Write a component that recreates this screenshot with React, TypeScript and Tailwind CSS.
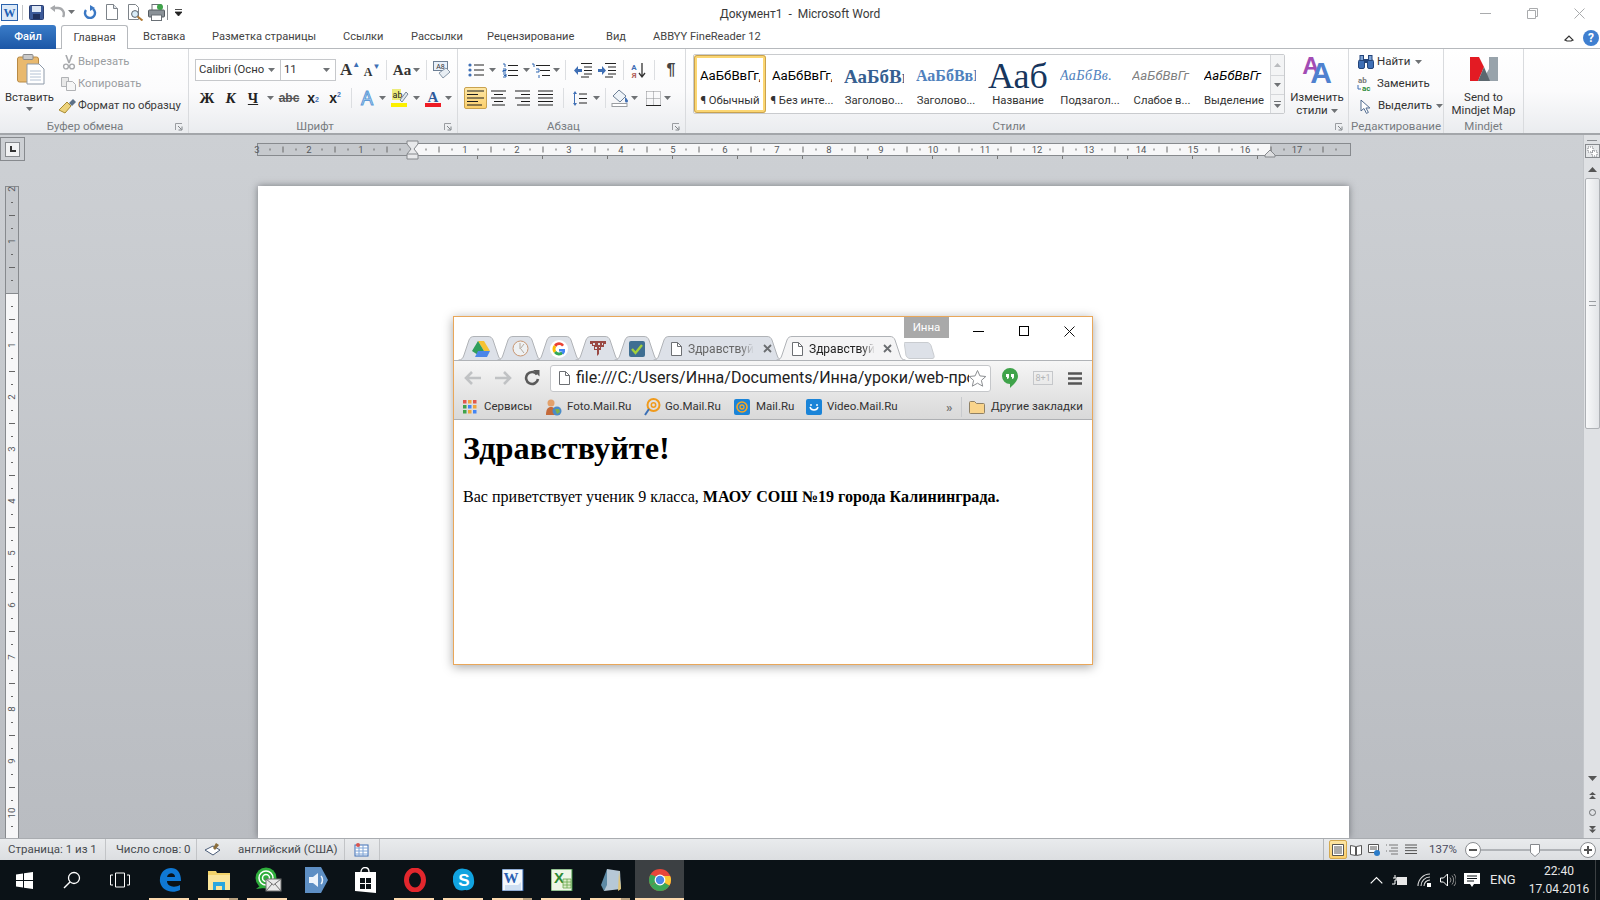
import type { ReactNode } from "react";

const uiFont = "font-['Roboto',sans-serif]";

const Caret = ({ className = "" }: { className?: string }) => (
  <svg width="7" height="4" viewBox="0 0 7 4" className={className}>
    <path d="M0 0h7L3.5 4z" fill="#6f7275" />
  </svg>
);

const Sep = ({ className = "" }: { className?: string }) => (
  <div className={`w-px h-[20px] bg-[#dcdee1] ${className}`} />
);

// cell of a fixed width with its content centered
const Cell = ({ className = "", children }: { className?: string; children?: ReactNode }) => (
  <div className={`flex items-center justify-center h-full shrink-0 ${className}`}>{children}</div>
);

const Launcher = () => (
  <svg width="8" height="8" viewBox="0 0 8 8" className="absolute right-[5px] top-[4px]">
    <path d="M0.5 7V0.5H7" fill="none" stroke="#9a9da1" />
    <path d="M3 3l3.5 3.5M7 3.5V7H3.5" fill="none" stroke="#7f8387" />
  </svg>
);

const Group = ({ label, className, labelClass = "", launcher, children }: { label: string; className: string; labelClass?: string; launcher?: boolean; children: ReactNode }) => (
  <div className={`relative flex flex-col shrink-0 border-r border-[#d9dbde] ${className}`}>
    <div className="h-[70px]">{children}</div>
    <div className={`relative h-[14px] text-center text-[11.5px] leading-[14px] text-[#777b80] ${labelClass}`}>
      {label}
      {launcher && <Launcher />}
    </div>
  </div>
);

const Lines = ({ kind }: { kind: "left" | "center" | "right" | "just" }) => {
  const rows = {
    left: ["M0 1h17", "M0 4.5h11", "M0 8h17", "M0 11.5h11", "M0 15h15"],
    center: ["M0 1h15", "M3 4.5h9", "M0 8h15", "M3 11.5h9", "M1 15h13"],
    right: ["M0 1h15", "M6 4.5h9", "M0 8h15", "M6 11.5h9", "M2 15h13"],
    just: ["M0 1h15", "M0 4.5h15", "M0 8h15", "M0 11.5h15", "M0 15h15"],
  }[kind];
  return (
    <svg width="17" height="16" viewBox="0 0 17 16">
      <path d={rows.join("")} stroke="#1c1c1c" strokeWidth="1.2" />
    </svg>
  );
};

const Bullets = () => (
  <svg width="16" height="14" viewBox="0 0 16 14">
    <path d="M6 2h10M6 7h10M6 12h10" stroke="#222" strokeWidth="1.2" />
    <circle cx="2" cy="2" r="1.6" fill="#3f6fb5" />
    <circle cx="2" cy="7" r="1.6" fill="#3f6fb5" />
    <circle cx="2" cy="12" r="1.6" fill="#3f6fb5" />
  </svg>
);

const Numbers = () => (
  <svg width="16" height="15" viewBox="0 0 16 15">
    <path d="M6 2.5h10M6 7.5h10M6 12.5h10" stroke="#222" strokeWidth="1.2" />
    <path d="M1 1h2v3M1 6h3v1.5H1V9h3M1 11h3v3H1M2 12.5h2" stroke="#2c64b0" strokeWidth="1" fill="none" />
  </svg>
);

const Multi = () => (
  <svg width="20" height="15" viewBox="0 0 20 15">
    <path d="M5 2.5h14M9 7.5h10M11 12.5h8" stroke="#222" strokeWidth="1.1" />
    <path d="M1 1h2v3M5 6h3v3H5M8 12v3" stroke="#2c64b0" strokeWidth="1" fill="none" />
  </svg>
);

const Indent = ({ flip }: { flip?: boolean }) => (
  <svg width="18" height="16" viewBox="0 0 18 16">
    <path d="M7 1.5h11M10 5h8M10 8.5h8M10 12h8M7 15h8" stroke="#222" strokeWidth="1.2" />
    {flip ? <path d="M0 7h4V4l4 4.5L4 13v-3H0z" fill="#3f6fb5" /> : <path d="M8 7H4V4L0 8.5 4 13v-3h4z" fill="#3f6fb5" />}
  </svg>
);

const RedoA = ({ stroke }: { stroke: string }) => (
  <svg width="14" height="14" viewBox="0 0 14 14">
    <path d="M3 5a5 5 0 1 0 7-1" fill="none" stroke={stroke} strokeWidth="2.4" />
    <path d="M7 0v6l5-3z" fill={stroke} />
  </svg>
);

const QuickAccess = () => (
  <div className="flex items-center h-full pl-[1px]">
    <svg width="17" height="17" viewBox="0 0 17 17">
      <rect x="0.5" y="0.5" width="16" height="16" fill="#dce9f7" stroke="#2a62ad" />
      <text x="8.5" y="13" textAnchor="middle" fontSize="12" fontWeight="700" fill="#1f5fb3" fontFamily="Liberation Serif">W</text>
    </svg>
    <div className="w-px h-[15px] bg-[#c4c6c9] ml-[4px] mr-[6px]" />
    <svg width="15" height="15" viewBox="0 0 15 15" className="mr-[6px]">
      <rect x="0.5" y="0.5" width="14" height="14" rx="1" fill="#3c5a99" stroke="#2a3f73" />
      <rect x="3" y="1" width="9" height="6" fill="#dfe8f5" />
      <rect x="4" y="9" width="7" height="5" fill="#20305c" />
    </svg>
    <svg width="15" height="14" viewBox="0 0 15 14">
      <path d="M13 12a6 6 0 0 0-6-9H4" fill="none" stroke="#a7a9ac" strokeWidth="2.4" />
      <path d="M5 0v7L0 3z" fill="#a7a9ac" />
    </svg>
    <Caret className="ml-[3px] mr-[8px]" />
    <RedoA stroke="#3b78c4" />
    <svg width="14" height="16" viewBox="0 0 14 16" className="ml-[8px]">
      <path d="M1.5.5h7l4 4v11h-11z" fill="#fff" stroke="#7d8389" />
      <path d="M8.5.5v4h4" fill="#dfe4ea" stroke="#7d8389" />
    </svg>
    <svg width="17" height="17" viewBox="0 0 17 17" className="ml-[8px]">
      <path d="M1.5.5h7l3 3v12h-10z" fill="#fff" stroke="#7d8389" />
      <circle cx="8" cy="10" r="3.4" fill="#d9ecf7" stroke="#59616a" />
      <path d="M10.5 12.5l5 4" stroke="#b07a35" strokeWidth="2" />
    </svg>
    <svg width="17" height="17" viewBox="0 0 17 17" className="ml-[4px]">
      <rect x="4" y="0.5" width="9" height="6" fill="#fff" stroke="#6a7076" />
      <rect x="0.5" y="6" width="16" height="7" rx="1" fill="#8b9298" stroke="#555b61" />
      <rect x="3.5" y="11" width="10" height="5.5" fill="#fff" stroke="#6a7076" />
      <circle cx="12" cy="3" r="3" fill="#3fa34a" />
    </svg>
    <div className="w-px h-[15px] bg-[#8d9094] ml-[2px] mr-[7px]" />
    <svg width="7" height="7" viewBox="0 0 7 7">
      <path d="M0 .5h7M0 3h7L3.5 7z" stroke="#222" fill="#222" strokeWidth="0.8" />
    </svg>
  </div>
);

const TitleBar = () => (
  <div className="grid grid-cols-[1fr_auto_1fr] h-[24px] items-center shrink-0 bg-white">
    <QuickAccess />
    <div className="pt-[3px] text-[12px] text-[#3a3a3a] whitespace-pre">Документ1  -  Microsoft Word</div>
    <div className="flex items-center justify-end h-full pr-[15px] gap-[36px] pt-[3px]">
      <div className="w-[11px] h-px bg-[#a9abad]" />
      <svg width="11" height="11" viewBox="0 0 11 11">
        <path d="M.5 2.5h8v8h-8zM2.5 2.5v-2h8v8h-2" fill="none" stroke="#a9abad" />
      </svg>
      <svg width="11" height="11" viewBox="0 0 11 11">
        <path d="M.5.5l10 10M10.5.5l-10 10" stroke="#a9abad" />
      </svg>
    </div>
  </div>
);

const MenuTabs = () => (
  <div className="relative flex items-end h-[25px] shrink-0 bg-white border-b border-[#b6b9bd] text-[11.1px] text-[#444]">
    <div className="w-[56px] h-[24px] -mb-px rounded-t-[3px] bg-gradient-to-b from-[#3a7cc8] to-[#1c57a6] text-white text-center leading-[24px] font-medium">Файл</div>
    <div className="ml-[5px] w-[67px] h-[24px] -mb-px rounded-t-[3px] border border-b-0 border-[#b6b9bd] bg-white text-center leading-[23px]">Главная</div>
    <span className="absolute left-[143px] top-[5px]">Вставка</span>
    <span className="absolute left-[212px] top-[5px]">Разметка страницы</span>
    <span className="absolute left-[343px] top-[5px]">Ссылки</span>
    <span className="absolute left-[411px] top-[5px]">Рассылки</span>
    <span className="absolute left-[487px] top-[5px]">Рецензирование</span>
    <span className="absolute left-[606px] top-[5px]">Вид</span>
    <span className="absolute left-[653px] top-[5px]">ABBYY FineReader 12</span>
    <div className="ml-auto flex items-center gap-[9px] pr-[1px] pb-[2px]">
      <svg width="10" height="7" viewBox="0 0 10 7">
        <path d="M1 5l4-4 4 4-2 1H3z" fill="none" stroke="#333" strokeWidth="1.2" />
      </svg>
      <div className="w-[16px] h-[16px] rounded-full bg-[#3f7fd0] text-white text-[12px] font-bold leading-[16px] text-center">?</div>
    </div>
  </div>
);

const Clipboard = () => (
  <Group label="Буфер обмена" className="w-[189px]" labelClass="pr-[18px]" launcher>
    <div className="flex h-full">
      <div className="w-[59px] flex flex-col items-center pt-[5px] text-[11.3px] text-[#333]">
        <svg width="28" height="31" viewBox="0 0 28 31" className="ml-[3px]">
          <rect x="0.5" y="3" width="21" height="25" rx="2" fill="#e9b96e" stroke="#b88a45" />
          <rect x="6" y="0.5" width="10" height="5" rx="1" fill="#c9c9c9" stroke="#8a8a8a" />
          <path d="M10 10h12l5 5v15H10z" fill="#fff" stroke="#8d99a8" />
          <path d="M13 17h11M13 20h11M13 23h11M13 26h11" stroke="#b4c2d4" />
        </svg>
        <div className="mt-[5px] leading-[15px]">Вставить</div>
        <Caret className="mt-[2px]" />
      </div>
      <div className="flex flex-col pt-[2px] text-[11.3px] whitespace-nowrap">
        <div className="flex items-center h-[22px] text-[#9a9da1]">
          <svg width="14" height="15" viewBox="0 0 14 15" className="ml-[3px] mr-[2px]">
            <path d="M4 0l3 8M10 0L7 8" stroke="#a7a9ac" strokeWidth="1.6" />
            <circle cx="4" cy="11.5" r="2.4" fill="none" stroke="#a7a9ac" strokeWidth="1.4" />
            <circle cx="10" cy="11.5" r="2.4" fill="none" stroke="#a7a9ac" strokeWidth="1.4" />
          </svg>
          Вырезать
        </div>
        <div className="flex items-center h-[22px] text-[#9a9da1]">
          <svg width="15" height="14" viewBox="0 0 15 14" className="ml-[2px] mr-[2px]">
            <path d="M.5.5h7v9h-7z" fill="#e8e8e8" stroke="#b0b2b5" />
            <path d="M5.5 4.5h6l3 3v6h-9z" fill="#f6f6f6" stroke="#b0b2b5" />
          </svg>
          Копировать
        </div>
        <div className="flex items-center h-[22px] text-[#3a3a3a]">
          <svg width="17" height="15" viewBox="0 0 17 15" className="mr-[2px]">
            <path d="M8 3l4 4-6 7-6-3z" fill="#ecd27b" stroke="#a88a32" />
            <path d="M10 4l4-4 3 3-4 4z" fill="#5b7088" />
          </svg>
          Формат по образцу
        </div>
      </div>
    </div>
  </Group>
);

const FontGroup = () => (
  <Group label="Шрифт" className="w-[269px]" labelClass="pr-[16px]" launcher>
    <div className="flex h-[22px] mt-[10px] ml-[6px] items-center text-[#333]">
      <div className="flex items-center justify-between w-[86px] h-full border border-[#c6c8cb] bg-white pl-[3px] pr-[5px] text-[11.3px] overflow-hidden">
        <span className="whitespace-nowrap w-[68px] overflow-hidden">Calibri (Осно</span>
        <Caret />
      </div>
      <div className="flex items-center justify-between w-[55px] h-full border border-l-0 border-[#c6c8cb] bg-white pl-[3px] pr-[5px] text-[11.3px]">
        11
        <Caret />
      </div>
      <Cell className="w-[22px] ml-[3px] text-[17px] font-bold font-['Liberation_Serif',serif]">A<span className="text-[8px] text-[#3f6fb5] -mt-[10px]">▲</span></Cell>
      <Cell className="w-[22px] text-[12px] font-bold font-['Liberation_Serif',serif] pt-[3px]">A<span className="text-[8px] text-[#3f6fb5] -mt-[10px]">▼</span></Cell>
      <Sep className="mx-[3px]" />
      <Cell className="w-[24px] text-[15px] font-bold font-['Liberation_Serif',serif]">Aa</Cell>
      <Caret className="-ml-[1px]" />
      <Sep className="ml-[6px] mr-[6px]" />
      <svg width="18" height="18" viewBox="0 0 18 18">
        <rect x="0.5" y="0.5" width="14" height="9" fill="#e8f0fa" stroke="#6d7f95" />
        <text x="7.5" y="8" textAnchor="middle" fontSize="7" fill="#333">A8</text>
        <path d="M6 12l7-5 4 4-7 6z" fill="#e8eef4" stroke="#8797a8" />
      </svg>
    </div>
    <div className="flex h-[22px] mt-[6px] ml-[6px] items-center text-[#222]">
      <Cell className="w-[24px] font-bold font-['Liberation_Serif',serif] text-[15px]">Ж</Cell>
      <Cell className="w-[23px] font-bold italic font-['Liberation_Serif',serif] text-[15px]">К</Cell>
      <Cell className="w-[22px] font-bold font-['Liberation_Serif',serif] text-[14px] underline">Ч</Cell>
      <Cell className="w-[12px]"><Caret /></Cell>
      <Cell className="w-[26px] font-bold font-['Liberation_Sans',sans-serif] text-[12px] text-[#555] line-through">abc</Cell>
      <Cell className="w-[22px] font-bold font-['Liberation_Sans',sans-serif] text-[14px]">x<sub className="text-[7px] text-[#3f6fb5]">2</sub></Cell>
      <Cell className="w-[22px] font-bold font-['Liberation_Sans',sans-serif] text-[14px]">x<sup className="text-[7px] text-[#3f6fb5]">2</sup></Cell>
      <Cell className="w-[10px]"><Sep /></Cell>
      <Cell className="w-[22px] text-[19px] font-['Noto_Sans',sans-serif] text-[#cfe4f7] [-webkit-text-stroke:1px_#5d9bd8]">A</Cell>
      <Cell className="w-[8px]"><Caret /></Cell>
      <div className="w-[2px]" />
      <Cell className="w-[24px]">
        <svg width="18" height="18" viewBox="0 0 18 18">
          <rect x="1" y="0" width="9" height="11" fill="#ecec7a" />
          <text x="1.5" y="9" fontSize="9" fill="#222">ab</text>
          <path d="M9 11l6-8 2 2-6 8z" fill="#dfe6ee" stroke="#7a8a9b" />
          <rect x="0" y="14" width="16" height="4" fill="#fcf000" />
        </svg>
      </Cell>
      <Cell className="w-[8px]"><Caret /></Cell>
      <div className="w-[2px]" />
      <Cell className="w-[22px] relative">
        <svg width="16" height="18" viewBox="0 0 16 18">
          <text x="8" y="13" textAnchor="middle" fontSize="15" fontWeight="700" fill="#2e5a9c" fontFamily="Liberation Serif">A</text>
          <rect x="0" y="14" width="16" height="4" fill="#ee1c25" />
        </svg>
      </Cell>
      <Cell className="w-[8px]"><Caret /></Cell>
    </div>
  </Group>
);

const ParagraphGroup = () => (
  <Group label="Абзац" className="w-[228px]" labelClass="pr-[16px]" launcher>
    <div className="flex h-[22px] mt-[10px] ml-[8px] items-center">
      <Cell className="w-[20px]"><Bullets /></Cell>
      <Cell className="w-[12px]"><Caret /></Cell>
      <Cell className="w-[24px]"><Numbers /></Cell>
      <Cell className="w-[8px]"><Caret /></Cell>
      <Cell className="w-[22px]"><Multi /></Cell>
      <Cell className="w-[8px]"><Caret /></Cell>
      <Cell className="w-[11px]"><Sep /></Cell>
      <Cell className="w-[24px]"><Indent /></Cell>
      <Cell className="w-[24px]"><Indent flip /></Cell>
      <Cell className="w-[8px]"><Sep /></Cell>
      <Cell className="w-[22px] relative">
        <svg width="18" height="17" viewBox="0 0 18 17">
          <text x="5" y="8" textAnchor="middle" fontSize="8" fontWeight="700" fill="#3f6fb5">А</text>
          <text x="5" y="16" textAnchor="middle" fontSize="8" fontWeight="700" fill="#b0605a">Я</text>
          <path d="M13 1v13M10 11l3 4 3-4" fill="none" stroke="#333" strokeWidth="1.3" />
        </svg>
      </Cell>
      <Cell className="w-[10px]"><Sep /></Cell>
      <Cell className="w-[24px] font-['Liberation_Sans',sans-serif] font-bold text-[16px] text-[#444]">¶</Cell>
    </div>
    <div className="flex h-[22px] mt-[6px] ml-[6px] items-center">
      <Cell className="w-[23px] rounded-[2px] border border-[#c9a24f] bg-gradient-to-b from-[#fde6a4] to-[#fbcf6b]"><Lines kind="left" /></Cell>
      <Cell className="w-[24px]"><Lines kind="center" /></Cell>
      <Cell className="w-[24px]"><Lines kind="right" /></Cell>
      <Cell className="w-[23px]"><Lines kind="just" /></Cell>
      <Cell className="w-[10px]"><Sep /></Cell>
      <Cell className="w-[24px]">
        <svg width="14" height="17" viewBox="0 0 14 17">
          <path d="M2 1l-2 3h4zM2 16l-2-3h4z" fill="#3f6fb5" />
          <path d="M1.5 3v11" stroke="#3f6fb5" />
          <path d="M6 4h8M6 8.5h8M6 13h8" stroke="#222" strokeWidth="1.2" />
        </svg>
      </Cell>
      <Cell className="w-[8px]"><Caret /></Cell>
      <Cell className="w-[10px]"><Sep /></Cell>
      <Cell className="w-[20px]">
        <svg width="18" height="18" viewBox="0 0 18 18">
          <path d="M8 1l7 6-6 6-7-6z" fill="#eef3f8" stroke="#6d7f95" />
          <path d="M14 8c2 2 3 3 3 4a1.5 1.5 0 0 1-3 0z" fill="#3f6fb5" />
          <rect x="1" y="14.5" width="15" height="3" fill="#fff" stroke="#9a9da1" />
        </svg>
      </Cell>
      <Cell className="w-[8px]"><Caret /></Cell>
      <div className="w-[5px]" />
      <Cell className="w-[20px]">
        <svg width="15" height="15" viewBox="0 0 15 15">
          <path d="M.5.5h14M.5 7.5h14M7.5.5v14M.5.5v14M14.5.5v14" stroke="#8a8d91" strokeDasharray="1 1" fill="none" />
          <path d="M0 14.500h15" stroke="#222" />
        </svg>
      </Cell>
      <Cell className="w-[8px]"><Caret /></Cell>
    </div>
  </Group>
);

const styleItems = [
  { sample: "АаБбВвГг,", label: "¶ Обычный", cls: "text-[13.2px] text-black font-['Roboto',sans-serif]" },
  { sample: "АаБбВвГг,", label: "¶ Без инте...", cls: "text-[13.2px] text-black font-['Roboto',sans-serif]" },
  { sample: "АаБбВвГ", label: "Заголово...", cls: "text-[19px] font-bold text-[#365f91] font-['Liberation_Serif',serif]" },
  { sample: "АаБбВвГ", label: "Заголово...", cls: "text-[16px] font-bold text-[#4f81bd] font-['Liberation_Serif',serif]" },
  { sample: "Ааб", label: "Название", cls: "text-[36px] text-[#17365d] font-['Liberation_Serif',serif]" },
  { sample: "АаБбВв.", label: "Подзагол...", cls: "text-[14px] italic text-[#4f81bd] font-['Liberation_Serif',serif] tracking-[0.5px]" },
  { sample: "АаБбВвГг", label: "Слабое в...", cls: "text-[13.2px] italic text-[#808080] font-['Roboto',sans-serif]" },
  { sample: "АаБбВвГг", label: "Выделение", cls: "text-[13.2px] italic text-black font-['Roboto',sans-serif]" },
];

const StylesGroup = () => (
  <Group label="Стили" className="w-[663px]" labelClass="pr-[16px]" launcher>
    <div className="flex h-full">
      <div className="flex w-[592px] h-[60px] ml-[7px] mt-[5px] border border-[#c9cbce] bg-white rounded-[2px]">
        {styleItems.map((s, i) => (
          <div key={i} className={`flex flex-col items-center w-[72px] h-[58px] overflow-hidden shrink-0 ${i === 0 ? "border-[3px] border-[#fbd672] rounded-[3px] outline outline-1 outline-[#c9a24f] outline-offset-[-1px]" : "pt-[3px]"}`}>
            <div className={`h-[36px] w-[60px] overflow-hidden flex items-center justify-start whitespace-nowrap leading-none ${s.cls}`}>{s.sample}</div>
            <div className="-mt-[1px] text-[11.3px] leading-[15px] text-[#333] whitespace-nowrap">{s.label}</div>
          </div>
        ))}
        <div className="ml-auto w-[14px] flex flex-col border-l border-[#d5d7da] bg-[#f3f4f5]">
          <Cell className="h-[20px]!"><svg width="7" height="4" viewBox="0 0 7 4"><path d="M0 4h7L3.5 0z" fill="#b9bbbe" /></svg></Cell>
          <Cell className="h-[20px]! border-y border-[#d5d7da]"><Caret /></Cell>
          <Cell className="h-[18px]! flex-col gap-[2px]"><div className="w-[7px] h-px bg-[#6f7275]" /><Caret /></Cell>
        </div>
      </div>
      <div className="flex flex-col items-center w-[58px] ml-[3px] pt-[6px] text-[11.5px] leading-[13px] text-[#333]">
        <svg width="32" height="30" viewBox="0 0 32 30">
          <text x="10" y="19" textAnchor="middle" fontSize="24" fontWeight="700" fill="#a24cb4" fontFamily="Liberation Sans">A</text>
          <text x="20" y="28" textAnchor="middle" fontSize="30" fontWeight="700" fill="#4f81cf" fontFamily="Liberation Sans">A</text>
        </svg>
        <div className="mt-[6px]">Изменить</div>
        <div className="flex items-center gap-[3px]">стили <Caret /></div>
      </div>
    </div>
  </Group>
);

const EditingGroup = () => (
  <Group label="Редактирование" className="w-[95px]">
    <div className="flex flex-col pt-[2px] text-[11.5px] text-[#333]">
      <div className="flex items-center h-[22px]">
        <svg width="16" height="14" viewBox="0 0 16 14" className="ml-[9px] mr-[3px]">
          <rect x="0.5" y="5" width="6" height="8.5" rx="1.5" fill="#3f6fb5" stroke="#24457a" />
          <rect x="9.5" y="5" width="6" height="8.5" rx="1.5" fill="#3f6fb5" stroke="#24457a" />
          <rect x="2" y="0.5" width="3.5" height="5" fill="#7fa4d6" stroke="#24457a" />
          <rect x="10.5" y="0.5" width="3.5" height="5" fill="#7fa4d6" stroke="#24457a" />
          <rect x="6" y="4" width="4" height="4" fill="#24457a" />
        </svg>
        Найти
        <Caret className="ml-[5px]" />
      </div>
      <div className="flex items-center h-[22px]">
        <svg width="16" height="16" viewBox="0 0 16 16" className="ml-[8px] mr-[4px]">
          <text x="1" y="7" fontSize="8" fontWeight="700" fill="#777">ab</text>
          <text x="5" y="15" fontSize="8" fontWeight="700" fill="#2e8b3d">ac</text>
          <path d="M1 9v4h3" fill="none" stroke="#3f6fb5" />
        </svg>
        Заменить
      </div>
      <div className="flex items-center h-[22px]">
        <svg width="11" height="15" viewBox="0 0 11 15" className="ml-[11px] mr-[7px]">
          <path d="M1 1v11l3-2.5 2.5 5 2-1-2.5-4.500H10z" fill="#fff" stroke="#4f6a8f" />
        </svg>
        Выделить
        <Caret className="ml-[4px]" />
      </div>
    </div>
  </Group>
);

const MindjetGroup = () => (
  <Group label="Mindjet" className="w-[80px]">
    <div className="flex flex-col items-center pt-[7px] text-[11.5px] leading-[13px] text-[#333]">
      <svg width="28" height="26" viewBox="0 0 28 26">
        <path d="M0 1h9l5 10-6 14H0z" fill="#e31b23" />
        <path d="M19 1h9v24H12l7-12z" fill="#98a3ab" />
        <path d="M14 11l6 14H8z" fill="#5c686f" />
      </svg>
      <div className="mt-[9px]">Send to</div>
      <div>Mindjet Map</div>
    </div>
  </Group>
);

const Ribbon = () => (
  <div className="flex h-[86px] shrink-0 bg-gradient-to-b from-white via-[#fbfbfc] to-[#eaecef] border-b-2 border-[#a3a6aa]">
    <Clipboard />
    <FontGroup />
    <ParagraphGroup />
    <StylesGroup />
    <EditingGroup />
    <MindjetGroup />
  </div>
);

const HRuler = () => {
  const ticks = [];
  for (let i = 0; i < 84; i++) {
    const x = i * 13;
    if (i % 4 === 0) {
      const n = i / 4 - 3;
      ticks.push(
        <text key={i} x={x} y="10" textAnchor="middle" fontSize="9.5" fill="#55585c" fontFamily="Roboto">
          {Math.abs(n) || ""}
        </text>
      );
    } else if (i % 4 === 2) {
      ticks.push(<path key={i} d={`M${x} 3.5v6`} stroke="#666" />);
    } else {
      ticks.push(<path key={i} d={`M${x} 5.5v2`} stroke="#666" />);
    }
  }
  const stops = [];
  for (let i = 1; i < 14; i++) stops.push(<path key={i} d={`M${155.5 + i * 65} 13v3`} stroke="#777" />);
  return (
    <svg width="1095" height="24" viewBox="0 -1 1095 24" className="ml-[232px] overflow-visible">
      <rect x="0.5" y="0.5" width="1093" height="12" fill="#c6c9cd" stroke="#878a8e" />
      <rect x="155" y="1" width="858" height="11" fill="#f7f7f8" />
      {ticks}
      {stops}
      <path d="M150 -2h11v3l-4 5 4 5v5h-11v-5l4-5-4-5z" fill="#e8e9eb" stroke="#85888c" />
      <path d="M150 11h11" stroke="#85888c" />
      <path d="M1008 12l5-5 5 5v2h-10z" fill="#dcdddf" stroke="#85888c" />
    </svg>
  );
};

const VRuler = () => {
  const parts = [];
  for (let i = -8; i < 44; i++) {
    const y = 107 + i * 13;
    if (y < 0) continue;
    if (((i % 4) + 4) % 4 === 0) {
      const n = Math.abs(i / 4);
      parts.push(
        <text key={i} x="7" y={y + 3} textAnchor="middle" fontSize="9.5" fill="#55585c" fontFamily="Roboto" transform={`rotate(-90 7 ${y})`}>
          {n || ""}
        </text>
      );
    } else if (((i % 4) + 4) % 4 === 2) {
      parts.push(<path key={i} d={`M4 ${y + 0.5}h6`} stroke="#666" />);
    } else {
      parts.push(<path key={i} d={`M6 ${y + 0.5}h2`} stroke="#666" />);
    }
  }
  return (
    <svg width="14" height="653" viewBox="0 0 14 653" className="ml-[5px]">
      <rect x="0.5" y="0.5" width="13" height="660" fill="#f7f7f8" stroke="#878a8e" />
      <rect x="1" y="1" width="12" height="106" fill="#c6c9cd" />
      <path d="M1 107.500h12" stroke="#878a8e" />
      {parts}
    </svg>
  );
};

const chromeTabPath = (w: number) =>
  `M0.5 24C4 24 5 22 6 19L11 4C12 1.5 13.5 0.5 16 0.5H${w - 16}C${w - 13.5} 0.5 ${w - 12} 1.5 ${w - 11} 4L${w - 6} 19C${w - 5} 22 ${w - 4} 24 ${w - 0.5} 24`;

const ChromeTab = ({ w, className, active, children }: { w: number; className: string; active?: boolean; children: ReactNode }) => (
  <div className={`relative h-[24px] shrink-0 ${className}`}>
    <svg width={w} height="24" className="absolute inset-0">
      <path d={chromeTabPath(w)} fill={active ? "#f4f4f5" : "#dde1e8"} stroke="#b0b3b7" />
    </svg>
    <div className="relative flex items-center justify-center h-full pt-[1px]">{children}</div>
  </div>
);

const DocIcon = ({ className = "" }: { className?: string }) => (
  <svg width="11" height="14" viewBox="0 0 11 14" className={className}>
    <path d="M.5.5h6l4 4v9h-10z" fill="#fff" stroke="#6c6f73" />
    <path d="M6.5.5v4h4" fill="none" stroke="#6c6f73" />
  </svg>
);

const ChromeX = ({ className = "" }: { className?: string }) => (
  <svg width="9" height="9" viewBox="0 0 9 9" className={className}>
    <path d="M1 1l7 7M8 1L1 8" stroke="#6a6d70" strokeWidth="1.8" />
  </svg>
);

const BrowserTabs = () => (
  <div className="relative flex items-end h-[43px] pl-[4px] shrink-0 bg-white">
    <div className="absolute right-[143px] top-0 w-[45px] h-[21px] bg-[#a9a9a9] text-white text-[11.5px] text-center leading-[21px]">Инна</div>
    <div className="absolute top-[14px] left-[519px] w-[11px] h-px bg-black" />
    <div className="absolute top-[9px] left-[565px] w-[10px] h-[10px] border border-black" />
    <svg width="11" height="11" viewBox="0 0 11 11" className="absolute top-[9px] left-[610px]">
      <path d="M.5.5l10 10M10.5.5l-10 10" stroke="#111" />
    </svg>
    <ChromeTab w={46} className="w-[46px]">
      <svg width="18" height="16" viewBox="0 0 18 16">
        <path d="M6 0h6l6 10h-6z" fill="#f6c231" />
        <path d="M6 0l6 10-3 6L0 10z" fill="#2f9e5b" />
        <path d="M6 10h12l-3 6H3z" fill="#4b86e8" />
      </svg>
    </ChromeTab>
    <ChromeTab w={46} className="w-[46px] -ml-[7px]">
      <svg width="17" height="17" viewBox="0 0 17 17">
        <circle cx="8.5" cy="8.5" r="7.5" fill="#eef1f3" stroke="#c89672" />
        <path d="M8 3v6M12 4L8.500 8.500 12 13" fill="none" stroke="#b4a89c" />
      </svg>
    </ChromeTab>
    <ChromeTab w={46} className="w-[46px] -ml-[7px]">
      <div className="flex items-center justify-center w-[18px] h-[18px] rounded-full bg-white">
        <svg width="14" height="14" viewBox="0 0 14 14">
          <path d="M12 3A6 6 0 0 0 2 3l2.200 2A3.400 3.400 0 0 1 10 4.400z" fill="#ea4335" />
          <path d="M2 3a6 6 0 0 0 0 8l2.200-2a3.400 3.400 0 0 1 0-4z" fill="#fbbc05" />
          <path d="M2 11a6 6 0 0 0 9.500.5L9.300 9.600a3.400 3.400 0 0 1-5.100-.6z" fill="#34a853" />
          <path d="M13 7H7v2.400h3.400a3 3 0 0 1-1.100 1.200l2.200 1.900A6 6 0 0 0 13 7z" fill="#4285f4" />
        </svg>
      </div>
    </ChromeTab>
    <ChromeTab w={46} className="w-[46px] -ml-[7px]">
      <svg width="16" height="15" viewBox="0 0 16 15">
        <path d="M0 0h16v3h-2v3h-3v3H9v4l-2 2V9H4V5H2V3H0z" fill="#9a4a44" />
        <path d="M3 2h2v2H3zM8 2h2v2H8zM12 2h1v2h-1zM5 6h2v2H5zM9 6h1v1H9z" fill="#dde1e8" />
      </svg>
    </ChromeTab>
    <ChromeTab w={46} className="w-[46px] -ml-[7px]">
      <svg width="16" height="16" viewBox="0 0 16 16">
        <rect width="16" height="16" rx="2" fill="#3f6f92" />
        <path d="M3 8l3.500 4L13 4" fill="none" stroke="#a3d13a" strokeWidth="2.400" />
      </svg>
    </ChromeTab>
    <ChromeTab w={130} className="w-[130px] -ml-[7px]">
      <div className="flex items-center w-full pl-[18px] text-[12px] text-[#666]">
        <DocIcon className="shrink-0" />
        <span className="ml-[6px] w-[66px] overflow-hidden whitespace-nowrap [mask-image:linear-gradient(to_right,black_80%,transparent)]">Здравствуйте!</span>
        <ChromeX className="ml-[9px]" />
      </div>
    </ChromeTab>
    <ChromeTab w={130} className="w-[130px] -ml-[7px] z-10" active>
      <div className="flex items-center w-full pl-[16px] text-[12px] text-[#222]">
        <DocIcon className="shrink-0" />
        <span className="ml-[6px] w-[66px] overflow-hidden whitespace-nowrap [mask-image:linear-gradient(to_right,black_80%,transparent)]">Здравствуйте!</span>
        <ChromeX className="ml-[8px]" />
      </div>
    </ChromeTab>
    <svg width="31" height="17" viewBox="0 0 31 17" className="-ml-[2px] mb-[1px]">
      <path d="M1 .5h22c2 0 3 1 4 3l3 10c.5 2 0 3-2 3H6c-2 0-3-1-4-3L.5 3C0 1.500 0 .5 1 .5z" fill="#dde1e8" stroke="#c9ccd0" />
    </svg>
  </div>
);

const BrowserToolbar = () => (
  <div className="flex items-center h-[35px] shrink-0 bg-gradient-to-b from-[#f6f6f6] to-[#e4e4e4] border-t border-[#b0b3b7]">
    <Cell className="w-[30px] ml-[4px]">
      <svg width="18" height="14" viewBox="0 0 18 14"><path d="M8 1L2 7l6 6M2 7h15" fill="none" stroke="#c0c2c4" strokeWidth="2.600" /></svg>
    </Cell>
    <Cell className="w-[30px]">
      <svg width="18" height="14" viewBox="0 0 18 14"><path d="M10 1l6 6-6 6M16 7H1" fill="none" stroke="#c0c2c4" strokeWidth="2.600" /></svg>
    </Cell>
    <Cell className="w-[28px]">
      <svg width="16" height="16" viewBox="0 0 16 16">
        <path d="M13 4.500A6 6 0 1 0 14 9" fill="none" stroke="#5a5a5a" strokeWidth="2.600" />
        <path d="M9 0l6.500 0v6.500z" fill="#5a5a5a" />
      </svg>
    </Cell>
    <div className="flex items-center ml-[4px] w-[443px] h-[27px] bg-white border border-[#c5c7ca] rounded-[3px] overflow-hidden">
      <DocIcon className="ml-[8px] shrink-0" />
      <div className="ml-[6px] w-[393px] overflow-hidden whitespace-nowrap text-[16px] text-[#222] font-['Roboto',sans-serif]">file:///C:/Users/Инна/Documents/Инна/уроки/web-проект/index.html</div>
      <svg width="19" height="19" viewBox="0 0 19 19" className="shrink-0 -ml-[1px]">
        <path d="M9.500 1.500l2.400 5.400 5.900.6-4.400 3.900 1.300 5.800-5.200-3-5.200 3 1.300-5.800L1.200 7.500l5.900-.6z" fill="#fff" stroke="#8b8e91" />
      </svg>
    </div>
    <Cell className="w-[38px]">
      <svg width="16" height="20" viewBox="0 0 16 20">
        <path d="M8 0a8 8 0 0 1 8 8c0 5-5 9-8 12v-4a8 8 0 0 1 0-16z" fill="#3fa34a" />
        <path d="M4 6h3v3c0 1-1 2-2 2V9H4zM9 6h3v3c0 1-1 2-2 2V9H9z" fill="#fff" />
      </svg>
    </Cell>
    <Cell className="w-[28px]">
      <div className="w-[20px] h-[14px] border border-[#c5c7ca] text-[9px] leading-[12px] text-center text-[#b5b7b9]">8+1</div>
    </Cell>
    <Cell className="w-[35px]">
      <svg width="14" height="13" viewBox="0 0 14 13"><path d="M0 1.500h14M0 6.500h14M0 11.500h14" stroke="#555" strokeWidth="2.600" /></svg>
    </Cell>
  </div>
);

const BookmarkIcon = ({ color, children }: { color: string; children: ReactNode }) => (
  <div className={`flex items-center justify-center w-[16px] h-[16px] rounded-[2px] text-white text-[12px] font-bold ${color}`}>{children}</div>
);

const BookmarksBar = () => (
  <div className="flex items-center h-[25px] shrink-0 pl-[9px] bg-gradient-to-b from-[#e4e4e4] to-[#d9d9d9] border-b border-[#aeb0b3] text-[11.5px] text-[#333]">
    <svg width="14" height="14" viewBox="0 0 14 14">
      <path d="M0 0h3.500v3.500H0z" fill="#e2574c" /><path d="M5 0h3.500v3.500H5z" fill="#f0a63c" /><path d="M10 0h3.500v3.500H10z" fill="#e2574c" />
      <path d="M0 5h3.500v3.500H0z" fill="#3fa34a" /><path d="M5 5h3.500v3.500H5z" fill="#4285f4" /><path d="M10 5h3.500v3.500H10z" fill="#f0a63c" />
      <path d="M0 10h3.500v3.500H0z" fill="#3fa34a" /><path d="M5 10h3.500v3.500H5z" fill="#f0a63c" /><path d="M10 10h3.500v3.500H10z" fill="#4285f4" />
    </svg>
    <span className="ml-[7px] w-[61px]">Сервисы</span>
    <svg width="17" height="17" viewBox="0 0 17 17">
      <circle cx="6" cy="4" r="3.500" fill="#e2a06a" />
      <path d="M1 16c0-6 2-8 5-8s5 2 5 8z" fill="#c46a3a" />
      <circle cx="12" cy="12" r="4.500" fill="#4a8cc9" />
      <path d="M10 10h4l1 3-3 2z" fill="#7fb04c" />
    </svg>
    <span className="ml-[5px] w-[77px]">Foto.Mail.Ru</span>
    <svg width="17" height="18" viewBox="0 0 17 18">
      <circle cx="9.500" cy="7" r="6" fill="none" stroke="#f09a1c" strokeWidth="2" />
      <circle cx="9.500" cy="7" r="2.200" fill="none" stroke="#f09a1c" strokeWidth="1.500" />
      <path d="M5 11l-4 6" stroke="#3a6fb5" strokeWidth="2" />
    </svg>
    <span className="ml-[4px] w-[69px]">Go.Mail.Ru</span>
    <BookmarkIcon color="bg-[#1a84d8]">
      <svg width="12" height="12" viewBox="0 0 12 12"><circle cx="6" cy="6" r="5" fill="none" stroke="#f6a623" strokeWidth="1.600" /><circle cx="6" cy="6" r="2" fill="none" stroke="#f6a623" strokeWidth="1.300" /></svg>
    </BookmarkIcon>
    <span className="ml-[6px] w-[50px]">Mail.Ru</span>
    <BookmarkIcon color="bg-[#1a84d8]">
      <svg width="12" height="12" viewBox="0 0 12 12"><path d="M2 6c1 4 7 4 8 0M3 3v2M9 3v2" fill="none" stroke="#fff" strokeWidth="1.400" /></svg>
    </BookmarkIcon>
    <span className="ml-[5px] w-[119px]">Video.Mail.Ru</span>
    <span className="w-[15px] text-[13px] font-bold text-[#777] leading-none">»</span>
    <div className="w-px h-[20px] bg-[#c8cacd] mr-[7px]" />
    <svg width="16" height="14" viewBox="0 0 16 14">
      <path d="M.5 2.500a1 1 0 0 1 1-1h4l2 2h7a1 1 0 0 1 1 1v8a1 1 0 0 1-1 1h-13a1 1 0 0 1-1-1z" fill="#f9d48b" stroke="#8f8064" />
    </svg>
    <span className="ml-[6px] whitespace-nowrap">Другие закладки</span>
  </div>
);

const BrowserWindow = () => (
  <div className={`flex flex-col w-[640px] h-[349px] ml-[195px] mt-[130px] border border-[#e9a75a] bg-white shadow-[0_2px_10px_rgba(0,0,0,0.35)] overflow-hidden ${uiFont}`}>
    <BrowserTabs />
    <BrowserToolbar />
    <BookmarksBar />
    <div className="pl-[9px] pt-[10px] font-['Liberation_Serif',serif] text-black">
      <h1 className="text-[32.3px] font-bold leading-[37px]">Здравствуйте!</h1>
      <p className="mt-[21px] text-[16.06px] leading-[18px]">
        Вас приветствует ученик 9 класса, <b>МАОУ СОШ №19 города Калининграда.</b>
      </p>
    </div>
  </div>
);

const ScrollBar = () => (
  <div className="flex flex-col items-center w-[17px] shrink-0 bg-[#dfe1e4] border-l border-[#c3c6ca]">
    <div className="w-[10px] h-px bg-[#8a8d91] mt-[5px]" />
    <div className="w-[15px] h-[14px] mt-[3px] border border-[#878a8e] bg-[#e6e8ea] flex items-center justify-center">
      <svg width="11" height="11" viewBox="0 0 11 11"><path d="M1 1h5v5H1zM5 5h5v5H5z" fill="#fff" stroke="#7a7d81" strokeDasharray="1 1" /></svg>
    </div>
    <Cell className="h-[17px]! mt-[3px]">
      <svg width="9" height="5" viewBox="0 0 9 5"><path d="M0 5h9L4.500 0z" fill="#555" /></svg>
    </Cell>
    <div className="w-[15px] h-[251px] border border-[#aeb1b5] rounded-[2px] bg-gradient-to-r from-[#f8f9fa] to-[#e2e4e7] flex items-center justify-center">
      <div className="w-[7px] h-[5px] border-y border-[#9a9da1]" />
    </div>
    <div className="flex-1" />
    <Cell className="h-[17px]!"><svg width="9" height="5" viewBox="0 0 9 5"><path d="M0 0h9L4.500 5z" fill="#555" /></svg></Cell>
    <Cell className="h-[17px]!"><svg width="7" height="7" viewBox="0 0 7 7"><path d="M0 3h7L3.500 0zM0 7h7L3.500 3.500zM0 5h7" fill="#555" /></svg></Cell>
    <Cell className="h-[17px]!"><div className="w-[7px] h-[7px] rounded-full border border-[#6a6d70]" /></Cell>
    <Cell className="h-[17px]!"><svg width="7" height="7" viewBox="0 0 7 7"><path d="M0 0h7L3.500 3.500zM0 3.500h7L3.500 7z" fill="#555" /></svg></Cell>
  </div>
);

const DocumentArea = () => (
  <div className="flex flex-1 min-h-0 bg-gradient-to-b from-[#cdd0d4] to-[#b9bcc1]">
    <div className="flex flex-col flex-1 min-w-0">
      <div className="flex items-start h-[51px] shrink-0 pt-[2px]">
        <div className="flex items-center justify-center w-[25px] h-[24px] border border-[#878a8e]">
          <div className="flex items-center justify-center w-[15px] h-[15px] border border-[#878a8e] bg-[#f1f2f3]">
            <div className="w-[6px] h-[6px] -mt-[1px] border-l-2 border-b-2 border-[#333]" />
          </div>
        </div>
        <div className="mt-[5px]">
          <HRuler />
        </div>
      </div>
      <div className="flex flex-1 min-h-0">
        <div className="w-[258px] shrink-0 overflow-hidden">
          <VRuler />
        </div>
        <div className="w-[1091px] bg-white shadow-[0_0_7px_rgba(60,63,68,0.6)] overflow-hidden">
          <BrowserWindow />
        </div>
      </div>
    </div>
    <ScrollBar />
  </div>
);

const StatusBar = () => (
  <div className="flex items-center h-[22px] shrink-0 bg-gradient-to-b from-[#e9ebed] to-[#dcdee1] border-t border-[#a9acb0] text-[11.5px] text-[#474a4e]">
    <span className="ml-[8px] w-[97px]">Страница: 1 из 1</span>
    <div className="w-px h-full bg-[#c2c4c7]" />
    <span className="ml-[10px] w-[80px]">Число слов: 0</span>
    <div className="w-px h-full bg-[#c2c4c7]" />
    <svg width="17" height="15" viewBox="0 0 17 15" className="ml-[7px]">
      <path d="M1 8l8-4 7 4-7 5z" fill="#fff" stroke="#4a5c78" />
      <path d="M9 6l3-5 3 2-4 5z" fill="#8a6d3b" />
    </svg>
    <span className="ml-[17px] w-[106px] whitespace-nowrap">английский (США)</span>
    <div className="w-px h-full bg-[#c2c4c7]" />
    <svg width="15" height="15" viewBox="0 0 15 15" className="ml-[9px]">
      <rect x="1" y="3" width="13" height="11" fill="#fff" stroke="#3f6fb5" />
      <path d="M1 6h13M1 9h13M1 12h13M5 3v11M9 3v11" stroke="#7fa4d6" />
      <circle cx="4" cy="3" r="2" fill="#d9534f" />
    </svg>
    <div className="w-px h-full bg-[#c2c4c7] ml-[10px]" />
    <div className="ml-auto flex items-center h-full">
      <div className="w-px h-full bg-[#b4b7ba]" />
      <Cell className="w-[18px] h-[19px]! ml-[5px] rounded-[2px] border border-[#d4a94f] bg-gradient-to-b from-[#fde6a4] to-[#fbcf6b]">
        <svg width="12" height="12" viewBox="0 0 12 12"><path d="M.5.500h11v11H.5zM2 3h8M2 5h8M2 7h8M2 9h8" fill="#fff" stroke="#444" strokeWidth="0.900" /></svg>
      </Cell>
      <Cell className="w-[18px]">
        <svg width="12" height="12" viewBox="0 0 12 12"><path d="M.5 1.500l5 1v9l-5-1zM11.500 1.500l-5 1v9l5-1z" fill="#fff" stroke="#555" /></svg>
      </Cell>
      <Cell className="w-[18px]">
        <svg width="12" height="12" viewBox="0 0 12 12"><path d="M.5.500h10v8H.5zM2 3h7M2 5h7" fill="#fff" stroke="#555" /><circle cx="9" cy="9" r="3" fill="#2b7cc9" /></svg>
      </Cell>
      <Cell className="w-[18px]">
        <svg width="12" height="11" viewBox="0 0 12 11"><path d="M3 1h9M5 4h7M3 7h9M5 10h7M0 1h1M0 7h1" stroke="#777" /></svg>
      </Cell>
      <Cell className="w-[19px]">
        <svg width="12" height="11" viewBox="0 0 12 11"><path d="M0 1h12M0 3.800h12M0 6.600h12M0 9.500h12" stroke="#555" /></svg>
      </Cell>
      <span className="w-[36px] ml-[5px] text-center text-[#4a4a5e]">137%</span>
      <div className="flex items-center justify-center w-[16px] h-[16px] rounded-full border border-[#8a8d91] bg-white text-[#555] ml-[4px]"><div className="w-[8px] h-[2px] bg-[#555]" /></div>
      <div className="relative w-[99px] h-[2px] bg-[#b0b3b7]">
        <svg width="10" height="13" viewBox="0 0 10 13" className="absolute left-[49px] -top-[5px]">
          <path d="M.5.500h9v8L5 12.500.5 8.500z" fill="#fff" stroke="#85888c" />
        </svg>
      </div>
      <div className="relative w-[16px] h-[16px] rounded-full border border-[#8a8d91] bg-white mr-[4px]">
        <div className="absolute left-[3px] top-[6px] w-[8px] h-[2px] bg-[#555]" />
        <div className="absolute left-[6px] top-[3px] w-[2px] h-[8px] bg-[#555]" />
      </div>
    </div>
  </div>
);

const TaskCell = ({ run, double, active, children }: { run?: boolean; double?: boolean; active?: boolean; children: ReactNode }) => (
  <div className={`relative flex items-center justify-center w-[49px] h-full shrink-0 ${active ? "bg-[#3c4043]" : ""}`}>
    {children}
    {run && (
      <div className={`absolute bottom-0 h-[2px] bg-[#fcd9ae] ${active ? "inset-x-0" : "left-[4px] w-[40px]"}`}>
        {double && <div className="absolute right-0 top-0 h-full w-[9px] bg-[#b9a17f]" />}
      </div>
    )}
  </div>
);

const Taskbar = () => (
  <div className={`flex items-center h-[40px] shrink-0 bg-[#0b1217] ${uiFont}`}>
    <div className="flex items-center justify-center w-[48px] h-full">
      <svg width="17" height="17" viewBox="0 0 17 17">
        <path d="M0 2.500L7 1.400V8H0zM8 1.200L17 0v8H8zM0 9h7v6.600L0 14.500zM8 9h9v8l-9-1.200z" fill="#fff" />
      </svg>
    </div>
    <div className="flex items-center justify-center w-[48px] h-full">
      <svg width="18" height="18" viewBox="0 0 18 18">
        <circle cx="11" cy="7" r="5.500" fill="none" stroke="#fff" strokeWidth="1.300" />
        <path d="M7 11l-6 6" stroke="#fff" strokeWidth="1.500" />
      </svg>
    </div>
    <div className="flex items-center justify-center w-[48px] h-full mr-px">
      <svg width="20" height="16" viewBox="0 0 20 16">
        <path d="M5.500 1h9v14h-9zM3 3H.5v10H3M17 3h2.500v10H17" fill="none" stroke="#fff" />
      </svg>
    </div>
    <TaskCell run>
      <svg width="22" height="24" viewBox="0 0 22 24">
        <path d="M1 14C0 5 6 0 12 0c6 0 10 4 10 13H8c0 6 8 7 13 4v5c-8 4-18 1-20-8zM8 9h8c0-5-7-5-8 0z" fill="#0f78d4" />
      </svg>
    </TaskCell>
    <TaskCell run double>
      <svg width="22" height="20" viewBox="0 0 22 20">
        <path d="M0 1h8l1 2h13v17H0z" fill="#f3d36a" />
        <rect y="5" width="22" height="15" fill="#fbe59b" />
        <path d="M5 12h12v8h-3v-4H8v4H5z" fill="#2aa6de" />
      </svg>
    </TaskCell>
    <TaskCell run>
      <svg width="28" height="26" viewBox="0 0 28 26">
        <circle cx="12" cy="11" r="10.500" fill="#2fae3c" />
        <path d="M2 22l5-4 3 3z" fill="#2fae3c" />
        <circle cx="12" cy="11" r="7" fill="none" stroke="#fff" strokeWidth="1.500" />
        <circle cx="12" cy="11" r="3.500" fill="none" stroke="#fff" strokeWidth="1.500" />
        <rect x="12" y="12" width="15" height="12" fill="#e9e9e9" stroke="#6f6f6f" />
        <path d="M12 12l7.500 6 7.500-6M12 24l6-7M27 24l-6-7" fill="none" stroke="#6f6f6f" />
      </svg>
    </TaskCell>
    <TaskCell>
      <svg width="25" height="26" viewBox="0 0 25 26">
        <path d="M1 0h16l7 13-7 13H1z" fill="#5e8fc4" />
        <path d="M5 10h4l5-4v14l-5-4H5z" fill="#eef4fb" />
        <path d="M17 9c2 2 2 6 0 8" fill="none" stroke="#eef4fb" strokeWidth="1.500" />
      </svg>
    </TaskCell>
    <TaskCell>
      <svg width="21" height="26" viewBox="0 0 21 26">
        <path d="M6 5c0-6 8-6 8 0" fill="none" stroke="#fff" strokeWidth="1.300" />
        <path d="M0 5h21v21l-21-2z" fill="#fff" />
        <path d="M5 11h5v5H5zM11 11h5v5h-5zM5 17h5v5H5zM11 17h5v5h-5z" fill="#0b1217" />
      </svg>
    </TaskCell>
    <TaskCell run>
      <svg width="22" height="24" viewBox="0 0 22 24">
        <ellipse cx="11" cy="12" rx="8.500" ry="10" fill="none" stroke="#e3272d" strokeWidth="5" />
      </svg>
    </TaskCell>
    <TaskCell run>
      <svg width="22" height="24" viewBox="0 0 22 24">
        <path d="M2 4c3-4 8-4 10-3 5 0 9 5 9 11 1 6-3 11-9 10-4 1-9 0-10-3C-1 14-1 8 2 4z" fill="#11a3e0" />
        <text x="11" y="18" textAnchor="middle" fontSize="17" fontWeight="700" fill="#fff" fontFamily="Liberation Sans">S</text>
      </svg>
    </TaskCell>
    <TaskCell run double>
      <svg width="22" height="22" viewBox="0 0 22 22">
        <rect width="21" height="22" fill="#f5f8fc" stroke="#2f62ad" />
        <text x="9" y="14" textAnchor="middle" fontSize="15" fontWeight="700" fill="#2a5fb2" fontFamily="Liberation Serif">W</text>
        <path d="M3 16h13l3-3v8H3z" fill="#cfdff2" />
      </svg>
    </TaskCell>
    <TaskCell run>
      <svg width="22" height="22" viewBox="0 0 22 22">
        <rect width="21" height="22" fill="#eff6e6" stroke="#3d8d3f" />
        <text x="8" y="14" textAnchor="middle" fontSize="15" fontWeight="700" fill="#2f8a33" fontFamily="Liberation Sans">X</text>
        <path d="M12 10h8v9h-8zM12 13h8M12 16h8M16 10v9" fill="#dcebc9" stroke="#6aa84f" strokeWidth="0.800" />
      </svg>
    </TaskCell>
    <TaskCell run double>
      <svg width="22" height="24" viewBox="0 0 22 24">
        <path d="M7 1l13 2 1 18-17 2z" fill="#b6c8d6" />
        <path d="M7 1L1 17l3 6 3-6z" fill="#5d8aa5" />
        <path d="M19 3l2 18-3 2z" fill="#e0c476" />
      </svg>
    </TaskCell>
    <TaskCell run active>
      <svg width="24" height="24" viewBox="0 0 24 24">
        <circle cx="12" cy="12" r="11" fill="#e8463a" />
        <path d="M12 12L21.500 17.500A11 11 0 0 1 12 23 11 11 0 0 1 2.500 17.500z" fill="#3ba757" />
        <path d="M12 12l9.500 5.500A11 11 0 0 0 23 12c0-1.500-.3-3-1-4H12z" fill="#fbc933" />
        <path d="M12 12L7 8 2.500 6.500A11 11 0 0 0 2.500 17.500L9 13z" fill="#3ba757" />
        <circle cx="12" cy="12" r="5.400" fill="#fff" />
        <circle cx="12" cy="12" r="4.200" fill="#4a86e8" />
      </svg>
    </TaskCell>
    <div className="flex items-center ml-auto h-full text-[#e8e8e8]">
      <svg width="13" height="8" viewBox="0 0 13 8" className="mr-[9px]"><path d="M.7 7.300L6.500 1.500l5.800 5.800" fill="none" stroke="#fff" strokeWidth="1.200" /></svg>
      <svg width="16" height="11" viewBox="0 0 16 11" className="mr-[9px]"><path d="M3 0v3M1 3h4v2H3v4H0" fill="none" stroke="#fff" /><rect x="5" y="2" width="10" height="8" fill="#e8e8e8" /></svg>
      <svg width="14" height="14" viewBox="0 0 14 14" className="mr-[9px]">
        <path d="M1 13a12 12 0 0 1 12-12M4 13a9 9 0 0 1 9-9M7 13a6 6 0 0 1 6-6" fill="none" stroke="#d8d8d8" strokeWidth="1.100" />
        <rect x="10" y="10" width="4" height="4" fill="#fff" />
      </svg>
      <svg width="16" height="14" viewBox="0 0 16 14" className="mr-[8px]">
        <path d="M.5 5h3l4-4v12l-4-4h-3z" fill="none" stroke="#fff" />
        <path d="M10 4.500a4 4 0 0 1 0 5M12 2.500a7 7 0 0 1 0 9M14 1a9 9 0 0 1 0 12" fill="none" stroke="#8f8f8f" />
      </svg>
      <svg width="16" height="15" viewBox="0 0 16 15" className="mr-[10px]">
        <path d="M0 0h16v11h-6l-2 3-2-3H0z" fill="#fff" />
        <path d="M3 3h10M3 5.500h10M3 8h7" stroke="#0b1217" />
      </svg>
      <span className="text-[13px] w-[25px] mr-[11px]">ENG</span>
      <div className="flex flex-col items-center w-[66px] text-[12px] leading-[18px]">
        <span>22:40</span>
        <span>17.04.2016</span>
      </div>
      <div className="w-px h-[40px] bg-[#3c4043] ml-[3px] mr-[4px]" />
    </div>
  </div>
);

export default function App() {
  return (
    <div className={`flex flex-col w-[1600px] h-[900px] overflow-hidden bg-white ${uiFont}`}>
      <TitleBar />
      <MenuTabs />
      <Ribbon />
      <DocumentArea />
      <StatusBar />
      <Taskbar />
    </div>
  );
}
